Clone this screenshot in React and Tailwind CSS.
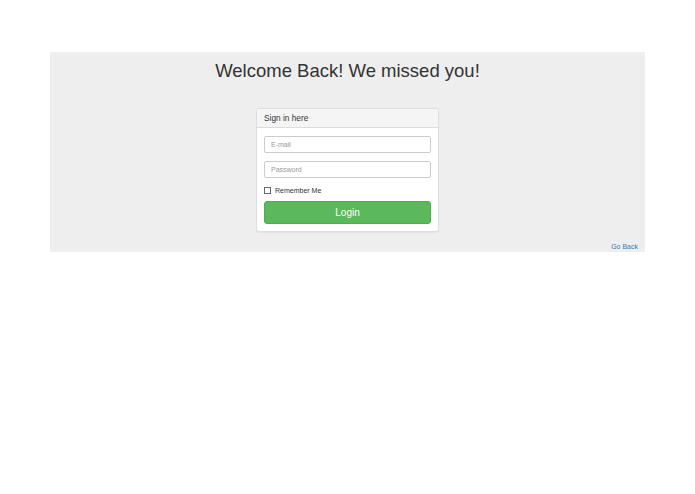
import React, { useState } from 'react';

const App = () => {
  const [remember, setRemember] = useState(false);

  return (
    <div className="min-h-screen bg-white pt-[52px] px-[50px]" style={{ fontFamily: '"Liberation Sans", Arial, sans-serif' }}>
      {/* Jumbotron */}
      <section className="bg-[#eeeeee] pt-[7px]">
        <h1 className="text-center text-[18.5px] leading-[24px] text-[#333333]">
          Welcome Back! We missed you!
        </h1>

        {/* Login panel */}
        <div className="w-[183px] mx-auto mt-[25px] bg-white border border-[#dddddd] rounded-[3px] shadow-[0_1px_1px_rgba(0,0,0,0.05)]">
          <div className="h-[19px] px-[7px] flex items-center bg-[#f5f5f5] border-b border-[#dddddd] rounded-t-[3px] text-[8.3px] text-[#333333]">
            Sign in here
          </div>
          <form className="px-[7px] pt-[8px] pb-[7px]" onSubmit={(e) => e.preventDefault()}>
            <input
              type="email"
              placeholder="E-mail"
              className="block w-full h-[17px] px-[6px] text-[7px] text-[#555] placeholder:text-[#999] border border-[#cccccc] rounded-[2px] focus:outline-none"
            />
            <input
              type="password"
              placeholder="Password"
              className="block w-full h-[17px] mt-[8px] px-[6px] text-[7px] text-[#555] placeholder:text-[#999] border border-[#cccccc] rounded-[2px] focus:outline-none"
            />
            <label className="flex items-center h-[7px] leading-[7px] mt-[9px] cursor-pointer text-[7px] text-[#333333]">
              <span className="w-[7px] h-[7px] border border-[#666] bg-white mr-[4px]">
                {remember && <span className="block w-full h-full bg-[#666]" />}
              </span>
              <input type="checkbox" className="hidden" checked={remember} onChange={() => setRemember(!remember)} />
              Remember Me
            </label>
            <button
              type="submit"
              className="block w-full h-[23px] mt-[7px] bg-[#5cb85c] hover:bg-[#4cae4c] text-white text-[10px] rounded-[3px] border border-[#4cae4c]"
            >
              Login
            </button>
          </form>
        </div>

        <div className="mt-[10px] h-[10px] leading-[10px] pr-[7px] text-right text-[7px]">
          <a href="#" className="text-[#337ab7]">Go Back</a>
        </div>
      </section>
    </div>
  );
};

export default App;
